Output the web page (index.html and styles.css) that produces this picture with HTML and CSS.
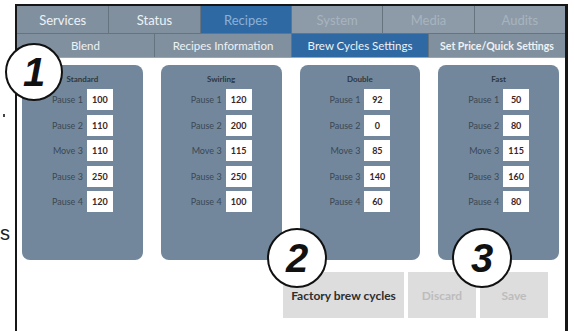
FILE: index.html
```html
<!DOCTYPE html>
<html lang="en">
<head>
<meta charset="UTF-8">
<meta name="viewport" content="width=device-width, initial-scale=1.0">
<title>Brew Cycles Settings</title>
<link rel="stylesheet" href="styles.css">
</head>
<body>
<div class="sheet">
    <!-- manual text cut off at the left edge -->
    <div class="margin-notes">
        <span class="note-dot"></span>
        <span class="note-s">s</span>
    </div>

    <div class="frame">
        <!-- main tabs -->
        <div class="tabs-main">
            <div class="tab">Services</div>
            <div class="tab">Status</div>
            <div class="tab active">Recipes</div>
            <div class="tab off">System</div>
            <div class="tab off">Media</div>
            <div class="tab off">Audits</div>
        </div>
        <!-- recipe sub tabs -->
        <div class="tabs-sub">
            <div class="tab">Blend</div>
            <div class="tab">Recipes Information</div>
            <div class="tab active">Brew Cycles Settings</div>
            <div class="tab bold">Set Price/Quick Settings</div>
        </div>

        <div class="content">
            <div class="cards">
                <div class="card">
                    <div class="card-title">Standard</div>
                    <div class="row"><span>Pause 1</span><b>100</b></div>
                    <div class="row"><span>Pause 2</span><b>110</b></div>
                    <div class="row"><span>Move 3</span><b>110</b></div>
                    <div class="row"><span>Pause 3</span><b>250</b></div>
                    <div class="row"><span>Pause 4</span><b>120</b></div>
                </div>
                <div class="card">
                    <div class="card-title">Swirling</div>
                    <div class="row"><span>Pause 1</span><b>120</b></div>
                    <div class="row"><span>Pause 2</span><b>200</b></div>
                    <div class="row"><span>Move 3</span><b>115</b></div>
                    <div class="row"><span>Pause 3</span><b>250</b></div>
                    <div class="row"><span>Pause 4</span><b>100</b></div>
                </div>
                <div class="card">
                    <div class="card-title">Double</div>
                    <div class="row"><span>Pause 1</span><b>92</b></div>
                    <div class="row"><span>Pause 2</span><b>0</b></div>
                    <div class="row"><span>Move 3</span><b>85</b></div>
                    <div class="row"><span>Pause 3</span><b>140</b></div>
                    <div class="row"><span>Pause 4</span><b>60</b></div>
                </div>
                <div class="card">
                    <div class="card-title">Fast</div>
                    <div class="row"><span>Pause 1</span><b>50</b></div>
                    <div class="row"><span>Pause 2</span><b>80</b></div>
                    <div class="row"><span>Move 3</span><b>115</b></div>
                    <div class="row"><span>Pause 3</span><b>160</b></div>
                    <div class="row"><span>Pause 4</span><b>80</b></div>
                </div>
            </div>

            <div class="buttons">
                <div class="btn factory">Factory brew cycles</div>
                <div class="btn small">Discard</div>
                <div class="btn small">Save</div>
            </div>
        </div>
    </div>

    <!-- callout numbers from the manual -->
    <div class="callout c1">1</div>
    <div class="callout c2">2</div>
    <div class="callout c3">3</div>
</div>
</body>
</html>
```

FILE: styles.css
```css
/* page */
body {
    margin: 0;
    background: #fff;
    font-family: Lato, "Open Sans", sans-serif;
}
.sheet {
    position: relative;
    display: flex;
    width: 574px;
    height: 331px;
    overflow: hidden;
}

/* bits of manual text at the left */
.margin-notes {
    width: 15px;
    display: flex;
    flex-direction: column;
    font-family: "Liberation Sans", Arial, sans-serif;
    color: #222;
}
.note-dot {
    width: 2px;
    height: 3px;
    margin-top: 114px;
    margin-left: 3px;
    background: #444;
}
.note-s {
    margin-top: 104px;
    margin-left: 0;
    font-size: 20px;
    line-height: 24px;
}

/* screen frame */
.frame {
    margin-top: 4px;
    width: 548px;
    border: 2px solid #161616;
    border-right-width: 3px;
    border-bottom: none;
    display: flex;
    flex-direction: column;
}

/* tabs */
.tabs-main,
.tabs-sub {
    display: grid;
    background: #80909f;
}
.tabs-main {
    grid-template-columns: repeat(6, 1fr);
    height: 27px;
    border-bottom: 1px solid #66747f;
}
.tabs-sub {
    grid-template-columns: repeat(4, 1fr);
    height: 23px;
    border-bottom: 1px solid #9aa6b0;
}
.tab {
    display: flex;
    align-items: center;
    justify-content: center;
    color: #eef2f5;
    border-left: 1px solid #66747f;
    white-space: nowrap;
}
.tab:first-child {
    border-left: none;
}
.tabs-main .tab {
    font-size: 13px;
}
.tabs-sub .tab {
    font-size: 11.5px;
}
.tab.active {
    background: #2e69a4;
}
.tabs-main .tab.active {
    color: #8db0d4;
}
.tab.off {
    background: #8d9ba8;
    color: #a7b4bf;
}
.tabs-sub .tab.bold {
    font-weight: bold;
    font-size: 10.5px;
}

/* content */
.content {
    flex: 1;
    background: #fff;
    padding: 7px 6px 0 5px;
}
.cards {
    display: flex;
    gap: 18px;
}
.card {
    width: 121px;
    height: 195px;
    background: #72879b;
    border-radius: 8px;
    display: flex;
    flex-direction: column;
    align-items: center;
    padding-top: 9px;
    box-sizing: border-box;
}
.card-title {
    font-size: 8px;
    font-weight: bold;
    color: #2e3843;
    line-height: 10px;
    margin-bottom: 5px;
}
.row {
    display: flex;
    align-items: center;
    gap: 4px;
    height: 21px;
    margin-bottom: 4.5px;
    font-size: 9px;
    color: #3b4855;
}
.row span {
    width: 31px;
    text-align: right;
    white-space: nowrap;
}
.row b {
    width: 26px;
    height: 21px;
    background: #fff;
    color: #3a2626;
    display: flex;
    align-items: center;
    justify-content: center;
}

/* buttons */
.buttons {
    display: flex;
    justify-content: flex-end;
    gap: 4px;
    margin-top: 12px;
    padding-right: 11px;
}
.btn {
    height: 46px;
    background: #dddddd;
    display: flex;
    align-items: center;
    justify-content: center;
    font-size: 12px;
    font-weight: bold;
}
.btn.factory {
    width: 121px;
    color: #2e2e2e;
}
.btn.small {
    width: 68px;
    color: #bcbcbc;
}

/* callouts over the screen */
.callout {
    position: absolute;
    width: 54px;
    height: 54px;
    border: 2.5px solid #111;
    border-radius: 50%;
    background: #fff;
    display: flex;
    align-items: center;
    justify-content: center;
    font-family: "Liberation Sans", Arial, sans-serif;
    font-weight: bold;
    font-style: italic;
    font-size: 40px;
    color: #111;
}
.c1 { left: 5px; top: 43px; }
.c2 { left: 267px; top: 228px; width: 56px; height: 56px; }
.c3 { left: 452px; top: 228px; width: 56px; height: 56px; }
```
